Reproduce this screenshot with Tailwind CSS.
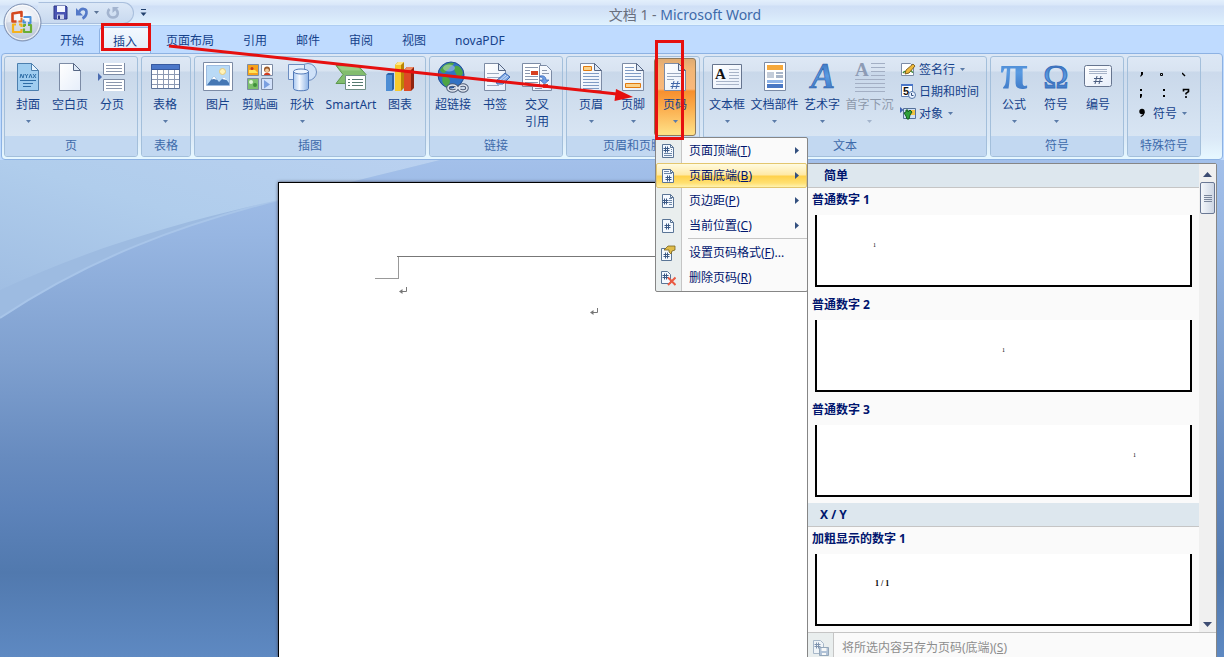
<!DOCTYPE html>
<html lang="zh-CN">
<head>
    <meta charset="UTF-8">
    <meta name="viewport" content="width=device-width, initial-scale=1.0">
    <title>文档 1 - Microsoft Word</title>
    <script src="https://cdn.jsdelivr.net/npm/@tailwindcss/browser@4"></script>
</head>
<body class="relative flex h-screen flex-col overflow-hidden bg-[#bfdbff] font-['Noto_Sans','Noto_Sans_CJK_SC',sans-serif] text-xs leading-[17px] text-[#15428b]">

    <!-- Shared shapes -->
    <svg class="absolute size-0">
        <defs>
            <linearGradient id="paper" x1="0" y1="0" x2="1" y2="1"><stop offset="0" stop-color="#fff"/><stop offset="1" stop-color="#e6eefa"/></linearGradient>
            <linearGradient id="blue" x1="0" y1="0" x2="0" y2="1"><stop offset="0" stop-color="#2f66b4"/><stop offset=".5" stop-color="#5a9be2"/><stop offset="1" stop-color="#3269b8"/></linearGradient>
            <linearGradient id="cyl" x1="0" y1="0" x2="1" y2="0"><stop offset="0" stop-color="#a9c8f0"/><stop offset=".4" stop-color="#f4f9ff"/><stop offset="1" stop-color="#8db3e6"/></linearGradient>
            <symbol id="page" viewBox="0 0 32 32">
                <path d="M5.500 2.500h14l7 7v20h-21z" fill="url(#paper)" stroke="#7c8ba5"/>
                <path d="M19.500 2.500v7h7z" fill="#dde8f6" stroke="#566684"/>
            </symbol>
            <symbol id="down" viewBox="0 0 5 3"><path d="M0 0h5L2.500 3z"/></symbol>
            <symbol id="mini" viewBox="0 0 16 16">
                <path d="M2.500 1.500h8l3 3v10h-11z" fill="#f4f9ff" stroke="#5a7596"/>
                <path d="M10.500 1.500v3h3" fill="none" stroke="#5a7596"/>
            </symbol>
            <symbol id="hash" viewBox="0 0 7 7"><path d="M2.500 0.500v6M4.500 0.500v6M0.500 2.500h6M0.500 4.500h6" fill="none" stroke="#3c5a86"/></symbol>
            <symbol id="return" viewBox="0 0 8 8"><path d="M7.500 0v4.500H2" fill="none" stroke="#777"/><path d="M0 4.500l3.500-2.500v5z" fill="#777"/></symbol>
        </defs>
    </svg>

    <!-- Title bar -->
    <header class="flex h-[26px] shrink-0 items-center border-b border-[#aecdf2] bg-[linear-gradient(#e3effc_0,#d9e7f9_5px,#cfdff6_6px,#d5e5f8_14px,#def0fd_24px,#e6f5ff_25px)]">
        <div class="relative flex h-full w-[150px] items-center">
            <button aria-label="Office" class="absolute left-[3px] top-[3px] z-10 size-[39px]">
                <svg viewBox="0 0 39 39" class="size-full">
                    <defs><radialGradient id="orb" cx=".5" cy=".35" r=".65"><stop offset="0" stop-color="#fff"/><stop offset=".6" stop-color="#e6eaf2"/><stop offset="1" stop-color="#b3bfd3"/></radialGradient></defs>
                    <circle cx="19.500" cy="19.500" r="18.500" fill="url(#orb)" stroke="#7f92b3"/>
                    <path d="M2.500 20a17 17 0 0 0 34 0q-17-5-34 0z" fill="#bcc7da" opacity=".5"/>
                    <circle cx="19.500" cy="19.500" r="17" fill="none" stroke="#fff" stroke-opacity=".8"/>
                    <g fill="none" stroke-linejoin="round">
                        <path d="M13.500 18.500h-4v-8l9-1.500v5" stroke="#d4481e" stroke-width="2.600"/>
                        <path d="M18.500 14.500v4h-3" stroke="#e8762a" stroke-width="2"/>
                        <path d="M20.500 14h7v6h-2.500M20.500 16.500v3h2.500" stroke="#4a8fd8" stroke-width="2"/>
                        <path d="M13 21.500h-3v7.500h8.500v-3M16 21.500h2.500v2.500" stroke="#f5b21c" stroke-width="2.200"/>
                        <path d="M21 25.500v3.500h7v-7h-3M21 24v-2h2" stroke="#6aae35" stroke-width="2.200"/>
                    </g>
                </svg>
            </button>
            <div class="ml-[38px] flex h-[22px] w-[96px] items-center gap-[7px] rounded-r-full border border-[#a9bfdd] border-l-transparent bg-[linear-gradient(#dce8f7,#c8d9ef)] pl-[14px]">
                <button aria-label="保存">
                    <svg viewBox="0 0 15 15" class="size-[15px]"><path d="M1 1h12l1 1v12H1z" fill="#4a55b4" stroke="#2c3685"/><path d="M4 1h8v6H4z" fill="#f3f6ff"/><path d="M4 9.500h7V14H4z" fill="#c9d0ea"/><path d="M5 10.500h2V14H5z" fill="#2c3685"/></svg>
                </button>
                <button aria-label="撤消" class="flex items-center gap-[5px]">
                    <svg viewBox="0 0 14 14" class="size-[14px]"><path d="M4 6C6 1.500 12 2 11.500 7c-.3 2.500-2 4.500-4 5.500" fill="none" stroke="#5479c8" stroke-width="2.600"/><path d="M1 2v7.500h7z" fill="#5479c8"/></svg>
                    <svg class="h-[3px] w-[5px] fill-[#5a7396]"><use href="#down"/></svg>
                </button>
                <button aria-label="恢复" disabled>
                    <svg viewBox="0 0 14 14" class="size-[14px]"><path d="M3.500 3C.5 6 2 11.500 7 11.500S13 6.500 10 3.500" fill="none" stroke="#a3b4cf" stroke-width="2.600"/><path d="M6.500 1H13L6.500 7z" fill="#a3b4cf"/></svg>
                </button>
            </div>
            <button aria-label="自定义快速访问工具栏" class="ml-1.5">
                <svg viewBox="0 0 7 8" class="h-2 w-[7px]"><path d="M1 .5h5" stroke="#23426e"/><path d="M.5 3.500h6l-3 3.500z" fill="#23426e"/></svg>
            </button>
        </div>
        <h1 class="flex-1 pr-1 pt-[3px] text-center text-[14px] text-[#3e6aaa]"><span class="text-[#696f7d]">文档 1 - </span>Microsoft Word</h1>
    </header>

    <!-- Ribbon tabs -->
    <nav class="flex h-[27px] shrink-0 items-end gap-px bg-[#bfdbff] pl-[46px]">
        <a href="#" class="px-[14px] pb-1">开始</a>
        <a href="#" class="-mb-px h-[27px] rounded-t border border-b-0 border-[#8db2e3] bg-[linear-gradient(#f2f8ff,#e1ecf8)] px-[13px] pt-[5px]">插入</a>
        <a href="#" class="px-[14px] pb-1">页面布局</a>
        <a href="#" class="px-[14px] pb-1">引用</a>
        <a href="#" class="px-[14px] pb-1">邮件</a>
        <a href="#" class="px-[14px] pb-1">审阅</a>
        <a href="#" class="px-[14px] pb-1">视图</a>
        <a href="#" class="px-[14px] pb-1">novaPDF</a>
    </nav>

    <!-- Ribbon -->
    <section class="relative z-10 mx-px flex shrink-0 gap-[3px] rounded border border-[#8db2e3] bg-[linear-gradient(#dce7f5_0,#d8e4f2_17px,#ccdaec_18px,#dbe9f7_84px,#e6f7ff_103px)] px-0.5 py-0.5 [&_button]:shrink-0">

        <!-- 页 -->
        <div class="flex flex-col rounded-[3px] border border-[#a3bfdb] bg-[linear-gradient(#dee8f5_0,#d8e3f1_14px,#c9d8ea_15px,#d8e5f3_79px)]">
            <div class="flex h-[79px] pl-0.5 pr-1 pt-px">
                <button class="flex h-[78px] w-[42px] flex-col items-center pt-[3px]">
                    <svg viewBox="0 0 32 32" class="size-8"><path d="M5.500 2.500h14l7 7v20h-21z" fill="#9fcdf0" stroke="#4c7fae"/><path d="M19.500 2.500v7h7z" fill="#e6f3fd" stroke="#4c7fae"/><path d="M8 17l1-4 2 4 1-4M13 13l1.500 2 1.500-2M14.500 15v2M17 17l1.500-4 1.500 4M21 13l3 4M24 13l-3 4M8 19.500h16M11 22.500h10M11 25.500h8" fill="none" stroke="#2e6da6"/></svg>
                    <span class="mt-[3px]">封面</span>
                    <svg class="mt-[7px] h-[3px] w-[5px] fill-[#5a7ba8]"><use href="#down"/></svg>
                </button>
                <button class="flex h-[78px] w-[42px] flex-col items-center pt-[3px]">
                    <svg class="size-8"><use href="#page"/></svg>
                    <span class="mt-[3px]">空白页</span>
                </button>
                <button class="flex h-[78px] w-[42px] flex-col items-center pt-[3px]">
                    <svg viewBox="0 0 32 32" class="size-8"><path d="M7.500 2v11.500h21V2M7.500 30V18.500h21V30" fill="#fff" stroke="#7c8ba5"/><path d="M10 4.500h16M10 7.500h16M10 10.500h16M10 21.500h16M10 24.500h16M10 27.500h16" stroke="#8b97ad"/><path d="M2 12v8l4-4z" fill="#4a6bb0"/></svg>
                    <span class="mt-[3px]">分页</span>
                </button>
            </div>
            <h2 class="h-5 rounded-b-[2px] bg-[#c2d8f1] text-center leading-5 text-[#3e6aaa]">页</h2>
        </div>

        <!-- 表格 -->
        <div class="flex flex-col rounded-[3px] border border-[#a3bfdb] bg-[linear-gradient(#dee8f5_0,#d8e3f1_14px,#c9d8ea_15px,#d8e5f3_79px)]">
            <div class="flex h-[79px] pl-0.5 pr-1 pt-px">
                <button class="flex h-[78px] w-[42px] flex-col items-center pt-[3px]">
                    <svg viewBox="0 0 32 32" class="size-8"><path d="M2.500 3.500h28v24h-28z" fill="#fff" stroke="#5d7398"/><path d="M2.500 3.500h28v5h-28z" fill="#4a76c8" stroke="#37599f"/><path d="M3 13.500h27M3 18.500h27M3 23.500h27M8.500 9v18M14.500 9v18M19.500 9v18M25.500 9v18" stroke="#8c99b2"/></svg>
                    <span class="mt-[3px]">表格</span>
                    <svg class="mt-[7px] h-[3px] w-[5px] fill-[#5a7ba8]"><use href="#down"/></svg>
                </button>
            </div>
            <h2 class="h-5 rounded-b-[2px] bg-[#c2d8f1] text-center leading-5 text-[#3e6aaa]">表格</h2>
        </div>

        <!-- 插图 -->
        <div class="flex flex-col rounded-[3px] border border-[#a3bfdb] bg-[linear-gradient(#dee8f5_0,#d8e3f1_14px,#c9d8ea_15px,#d8e5f3_79px)]">
            <div class="flex h-[79px] pl-0.5 pr-1 pt-px">
                <button class="flex h-[78px] w-[42px] flex-col items-center pt-[3px]">
                    <svg viewBox="0 0 32 32" class="size-8"><path d="M1.500 1.500h29v28h-29z" fill="#fff" stroke="#7c8ba5"/><path d="M4.500 4.500h23v20h-23z" fill="#b9daf6" stroke="#9dbbe0"/><circle cx="20.500" cy="10.500" r="3" fill="#fff3b8" stroke="#e5c878"/><path d="M5 24l7-9 5 6 5-5 5 6v2z" fill="#4678b4"/><path d="M9.500 18.500l2.500-3.500 3 4-3-1zM20 18l2-2 3 3-3-.5z" fill="#fff"/></svg>
                    <span class="mt-[3px]">图片</span>
                </button>
                <button class="flex h-[78px] w-[42px] flex-col items-center pt-[3px]">
                    <svg viewBox="0 0 32 32" class="size-8"><g stroke="#7c8ba5"><path d="M3.500 3.500h11v11h-11z" fill="#f5a21c"/><path d="M17.500 3.500h11v11h-11z" fill="#fff"/><path d="M3.500 17.500h11v11h-11z" fill="#7cc06c"/><path d="M17.500 17.500h11v11h-11z" fill="#d3e2fb"/></g><path d="M5 9h6l3 3H5z" fill="#ffe35a"/><circle cx="8" cy="7.500" r="1.500" fill="#c23a1c"/><path d="M20 14c0-3 6-3 6.500 0z" fill="#d23a20"/><circle cx="23" cy="8.500" r="3" fill="#9b5a2a"/><circle cx="23" cy="9.500" r="2" fill="#f4c79a"/><circle cx="7" cy="21" r="2" fill="#e3f6dc"/><circle cx="11" cy="24" r="2" fill="#3f8f3a"/><path d="M20 19l6 4.500-6 4z" fill="#7a9fe0"/></svg>
                    <span class="mt-[3px]">剪贴画</span>
                </button>
                <button class="flex h-[78px] w-[42px] flex-col items-center pt-[3px]">
                    <svg viewBox="0 0 32 32" class="size-8"><circle cx="22" cy="11" r="8.500" fill="#cfe1f8" stroke="#6b8cc0"/><path d="M2.500 3.500h16v15h-16z" fill="#e3eefc" stroke="#6b8cc0"/><path d="M7.500 10.500v17c0 3 15 3 15 0v-17z" fill="url(#cyl)" stroke="#5179b8"/><ellipse cx="15" cy="10.500" rx="7.500" ry="2.500" fill="#eef6ff" stroke="#5179b8"/></svg>
                    <span class="mt-[3px]">形状</span>
                    <svg class="mt-[7px] h-[3px] w-[5px] fill-[#5a7ba8]"><use href="#down"/></svg>
                </button>
                <button class="flex h-[78px] w-14 flex-col items-center pt-[3px]">
                    <svg viewBox="0 0 32 32" class="size-8"><path d="M1 4.500h22l8 9-8 9H1l7-9z" fill="#82bd6e" stroke="#5c984d"/><path d="M3 5.500h19l4 4H7z" fill="#a5d692" opacity=".7"/><path d="M10.500 14.500h20v14h-20z" fill="#fff" stroke="#6f8f86"/><path d="M13 18.500h2M13 21.500h2M13 24.500h2M17 18.500h11M17 21.500h11M17 24.500h11" stroke="#557a70"/></svg>
                    <span class="mt-[3px]">SmartArt</span>
                </button>
                <button class="flex h-[78px] w-[42px] flex-col items-center pt-[3px]">
                    <svg viewBox="0 0 32 32" class="size-8"><path d="M2 14l2-2h6v16l-2 2H2z" fill="#2b62a8"/><path d="M2 14h6v16H2z" fill="#4d8dd4"/><path d="M11 4l3-3h6v26l-3 3h-6z" fill="#b98406"/><path d="M11 4h6v26h-6z" fill="#f7c92c"/><path d="M11 4l3-3h6l-3 3z" fill="#ffe680"/><path d="M20 9l3-3h7v21l-3 3h-7z" fill="#8f2410"/><path d="M20 9h7v21h-7z" fill="#dc4a26"/><path d="M20 9l3-3h7l-3 3z" fill="#f08a64"/></svg>
                    <span class="mt-[3px]">图表</span>
                </button>
            </div>
            <h2 class="h-5 rounded-b-[2px] bg-[#c2d8f1] text-center leading-5 text-[#3e6aaa]">插图</h2>
        </div>

        <!-- 链接 -->
        <div class="flex flex-col rounded-[3px] border border-[#a3bfdb] bg-[linear-gradient(#dee8f5_0,#d8e3f1_14px,#c9d8ea_15px,#d8e5f3_79px)]">
            <div class="flex h-[79px] pl-0.5 pr-1 pt-px">
                <button class="flex h-[78px] w-[42px] flex-col items-center pt-[3px]">
                    <svg viewBox="0 0 32 32" class="size-8"><circle cx="14" cy="14" r="13" fill="#3272c4" stroke="#1f4d92"/><path d="M3 9C7 3 12 1 17 2c-1 3-4 3-5 6-3 1-3 4-5 4s-3-1-4-3zM18 5c4-1 7 3 8 7-2 5-5 6-6 3-1-4-4-5-2-10zM6 15c4 0 7 2 7 5s-2 4-3 6C6 24 4 20 6 15z" fill="#4ea544"/><ellipse cx="12" cy="7" rx="6" ry="3.500" fill="#fff" opacity=".35"/><g fill="none" stroke="#4e5d78" stroke-width="3.600"><ellipse cx="15.500" cy="27" rx="4.500" ry="3"/><ellipse cx="26" cy="27" rx="4" ry="3"/><path d="M17 27h7"/></g><g fill="none" stroke="#dfe5ef" stroke-width="1.600"><ellipse cx="15.500" cy="27" rx="4.500" ry="3"/><ellipse cx="26" cy="27" rx="4" ry="3"/><path d="M17 27h7"/></g></svg>
                    <span class="mt-[3px]">超链接</span>
                </button>
                <button class="flex h-[78px] w-[42px] flex-col items-center pt-[3px]">
                    <svg viewBox="0 0 32 32" class="size-8"><use href="#page"/><path d="M8 12.500h12M8 16.500h14M8 20.500h9M8 24.500h12" stroke="#9aa8bf"/><path d="M17 20l9-8 5 4-7 7h-6z" fill="#7fa8e4" stroke="#3a68b4"/><path d="M20 20l7-6M22 21l7-6" stroke="#cfe0f8"/></svg>
                    <span class="mt-[3px]">书签</span>
                </button>
                <button class="flex h-[78px] w-[42px] flex-col items-center pt-[3px]">
                    <svg viewBox="0 0 32 32" class="size-8"><path d="M1.500 2.500h18v23h-18z" fill="#fff" stroke="#7c8ba5"/><path d="M4 6.500h13M4 9.500h5M4 12.500h5M4 15.500h13M4 18.500h13M4 21.500h13" stroke="#8b97ad"/><path d="M10 10h7v4h-7z" fill="#d8401e"/><path d="M18.500 4.500h7l5 5v20h-19v-4h7z" fill="url(#paper)" stroke="#7c8ba5"/><path d="M21 9.500h5M21 12.500h7M14 27.500h7" stroke="#8b97ad"/><path d="M22 23h5v4h-5z" fill="#d8401e"/><path d="M19 15c4-1 6 1 6 4h3l-4.500 4-4.500-4h3c0-2-1-3-3-3z" fill="#6c9ce6" stroke="#2f5eb0" stroke-width=".7"/></svg>
                    <span class="mt-[3px] w-6">交叉引用</span>
                </button>
            </div>
            <h2 class="h-5 rounded-b-[2px] bg-[#c2d8f1] text-center leading-5 text-[#3e6aaa]">链接</h2>
        </div>

        <!-- 页眉和页脚 -->
        <div class="flex flex-col rounded-[3px] border border-[#a3bfdb] bg-[linear-gradient(#dee8f5_0,#d8e3f1_14px,#c9d8ea_15px,#d8e5f3_79px)]">
            <div class="flex h-[79px] pl-[3px] pr-[3px] pt-px">
                <button class="flex h-[78px] w-[42px] flex-col items-center pt-[3px]">
                    <svg viewBox="0 0 32 32" class="size-8"><use href="#page"/><path d="M8.500 5.500h8v4h-8z" fill="#fbd28b" stroke="#e07a10"/><path d="M8 12.500h16M8 15.500h16M8 18.500h16M8 21.500h16M8 24.500h16M8 27.500h16" stroke="#7f9bc4"/></svg>
                    <span class="mt-[3px]">页眉</span>
                    <svg class="mt-[7px] h-[3px] w-[5px] fill-[#5a7ba8]"><use href="#down"/></svg>
                </button>
                <button class="flex h-[78px] w-[42px] flex-col items-center pt-[3px]">
                    <svg viewBox="0 0 32 32" class="size-8"><use href="#page"/><path d="M8 6.500h9M8 9.500h9M8 12.500h16M8 15.500h16M8 18.500h16" stroke="#7f9bc4"/><path d="M8.500 22.500h15v4h-15z" fill="#fbd28b" stroke="#e07a10"/></svg>
                    <span class="mt-[3px]">页脚</span>
                    <svg class="mt-[7px] h-[3px] w-[5px] fill-[#5a7ba8]"><use href="#down"/></svg>
                </button>
                <div class="relative">
                    <button class="flex h-[78px] w-[42px] flex-col items-center rounded-[3px] border border-[#8e7a5c] bg-[linear-gradient(#dfab72_0,#f2b676_10px,#f9b87c_30px,#f78f2e_32px,#fbab4b_48px,#fede84_74px)] pt-[2px]">
                        <svg viewBox="0 0 32 32" class="size-8"><use href="#page"/><path d="M8 12.500h14M8 15.500h14M8 18.500h7" stroke="#9aa8bf"/><path d="M15 20l-2 8M19 20l-2 8M12 22.500h9M11.500 25.500h9" stroke="#4166a8" fill="none"/></svg>
                        <span class="mt-[3px]">页码</span>
                        <svg class="mt-[7px] h-[3px] w-[5px] fill-[#5a7ba8]"><use href="#down"/></svg>
                    </button>

                    <!-- 页码 menu -->
                    <ul class="absolute left-px top-[79px] w-[153px] rounded-[2px] border border-[#868686] bg-[linear-gradient(to_right,#e9eeee_25px,#c5c5c5_25px,#c5c5c5_26px,#fafafa_26px)] pb-px text-[#00156e]">
                        <li>
                            <button class="flex h-[25px] w-full items-center pl-1 pr-2">
                                <svg viewBox="0 0 16 16" class="size-4"><use href="#mini"/><use href="#hash" x="3" y="3" width="7" height="7"/><path d="M11 6.500h1M11 8.500h1M4 10.500h8M4 12.500h8" stroke="#6d87a8"/></svg>
                                <span class="ml-[13px] flex-1 text-left">页面顶端(<u>T</u>)</span>
                                <svg viewBox="0 0 4 7" class="h-[7px] w-1"><path d="M0 0v7l4-3.500z" fill="#33507f"/></svg>
                            </button>
                        </li>
                        <li class="relative">
                            <button class="flex h-[25px] w-full items-center rounded-[2px] border border-[#e3c66e] bg-[linear-gradient(#fffbe0_0,#ffe9a5_11px,#ffd14b_12px,#ffe072_19px,#fff3b0_23px)] pl-[3px] pr-[7px]">
                                <svg viewBox="0 0 16 16" class="size-4"><use href="#mini"/><path d="M4 3.500h5M4 5.500h8" stroke="#6d87a8"/><use href="#hash" x="5" y="7" width="7" height="7"/></svg>
                                <span class="ml-[13px] flex-1 text-left">页面底端(<u>B</u>)</span>
                                <svg viewBox="0 0 4 7" class="h-[7px] w-1"><path d="M0 0v7l4-3.500z" fill="#33507f"/></svg>
                            </button>

                            <!-- Gallery -->
                            <div class="absolute left-full top-0 w-[410px] rounded-[2px] border border-[#868686] bg-[#fafafa]">
                                <div class="flex">
                                    <div class="flex-1">
                                        <h3 class="h-6 border-b border-[#c5c5c5] bg-[#dde7ee] pl-4 font-bold leading-6">简单</h3>
                                        <div class="px-[7px] pb-1.5">
                                            <h4 class="-ml-[3px] mb-1 h-[23px] font-bold leading-[23px]">普通数字 1</h4>
                                            <div class="h-[72px] border-2 border-t-0 border-black bg-white pl-[56px] pt-[26px] font-['Liberation_Serif',serif] text-[6px] leading-2 text-black">1</div>
                                        </div>
                                        <div class="px-[7px] pb-1.5">
                                            <h4 class="-ml-[3px] mb-1 h-[23px] font-bold leading-[23px]">普通数字 2</h4>
                                            <div class="h-[72px] border-2 border-t-0 border-black bg-white pt-[26px] text-center font-['Liberation_Serif',serif] text-[6px] leading-2 text-black">1</div>
                                        </div>
                                        <div class="px-[7px] pb-1.5">
                                            <h4 class="-ml-[3px] mb-1 h-[23px] font-bold leading-[23px]">普通数字 3</h4>
                                            <div class="h-[72px] border-2 border-t-0 border-black bg-white pr-[54px] pt-[26px] text-right font-['Liberation_Serif',serif] text-[6px] leading-2 text-black">1</div>
                                        </div>
                                        <h3 class="h-6 border-b border-[#c5c5c5] bg-[#dde7ee] pl-3 font-bold leading-6">X / Y</h3>
                                        <div class="px-[7px] pb-1.5">
                                            <h4 class="-ml-[3px] mb-1 h-[23px] font-bold leading-[23px]">加粗显示的数字 1</h4>
                                            <div class="h-[72px] border-2 border-t-0 border-black bg-white pl-[58px] pt-[26px] font-['Liberation_Serif',serif] text-[8px] font-bold leading-2 text-black">1 / 1</div>
                                        </div>
                                    </div>
                                    <div class="flex w-[17px] flex-col items-center bg-[#f0f0f0]">
                                        <svg viewBox="0 0 9 5" class="mt-[8px] h-[5px] w-[9px]"><path d="M0 5h9L4.500 0z" fill="#3d4c72"/></svg>
                                        <div class="mt-[5px] flex h-8 w-[15px] flex-col items-center justify-center gap-px rounded-[2px] border border-[#6a7894] bg-[linear-gradient(to_right,#f4f7fb,#cdd6e4)]">
                                            <span class="h-px w-2 bg-[#7a869c]"></span>
                                            <span class="h-px w-2 bg-[#7a869c]"></span>
                                            <span class="h-px w-2 bg-[#7a869c]"></span>
                                            <span class="h-px w-2 bg-[#7a869c]"></span>
                                        </div>
                                        <svg viewBox="0 0 9 5" class="mb-[5px] mt-auto h-[5px] w-[9px]"><path d="M0 0h9L4.500 5z" fill="#3d4c72"/></svg>
                                    </div>
                                </div>
                                <button disabled class="flex h-[30px] w-full items-center border-t border-[#c5c5c5] bg-[linear-gradient(to_right,#e9eeee_25px,#c5c5c5_25px,#c5c5c5_26px,#fafafa_26px)] pl-1 text-[#8d8d8d]">
                                    <svg viewBox="0 0 17 17" class="size-[17px]"><g opacity=".6"><path d="M1.500 1.500h7l3 3v10h-10z" fill="#f4f9ff" stroke="#7d95b2"/><use href="#hash" x="2" y="3" width="7" height="7"/><path d="M7.500 8.500h9v8h-9z" fill="#8ba6c8" stroke="#5c7899"/><path d="M9.500 9h5v3h-5zM10 14h4v2h-4z" fill="#fff"/></g></svg>
                                    <span class="ml-[13px]">将所选内容另存为页码(底端)(<u>S</u>)</span>
                                </button>
                            </div>
                        </li>
                        <li>
                            <button class="flex h-[25px] w-full items-center pl-1 pr-2">
                                <svg viewBox="0 0 16 16" class="size-4"><use href="#mini"/><use href="#hash" x="2" y="5" width="7" height="7"/><path d="M9 5.500h3M9 7.500h3M9 9.500h3M9 11.500h3" stroke="#6d87a8"/></svg>
                                <span class="ml-[13px] flex-1 text-left">页边距(<u>P</u>)</span>
                                <svg viewBox="0 0 4 7" class="h-[7px] w-1"><path d="M0 0v7l4-3.500z" fill="#33507f"/></svg>
                            </button>
                        </li>
                        <li>
                            <button class="flex h-[25px] w-full items-center pl-1 pr-2">
                                <svg viewBox="0 0 16 16" class="size-4"><use href="#mini"/><use href="#hash" x="4" y="5" width="7" height="7"/></svg>
                                <span class="ml-[13px] flex-1 text-left">当前位置(<u>C</u>)</span>
                                <svg viewBox="0 0 4 7" class="h-[7px] w-1"><path d="M0 0v7l4-3.500z" fill="#33507f"/></svg>
                            </button>
                        </li>
                        <li class="mb-px ml-8 h-px bg-[#c5c5c5]"></li>
                        <li>
                            <button class="flex h-[25px] w-full items-center pl-1 pr-2">
                                <svg viewBox="0 0 16 16" class="size-4"><path d="M1.500 3.500h7l3 3v9h-10z" fill="#f4f9ff" stroke="#5a7596"/><use href="#hash" x="3" y="7" width="7" height="7"/><path d="M4 5l4-4h7v4l-3 1-1 3-2-2V5z" fill="#e0bc4a" stroke="#7a6420" stroke-width=".8"/></svg>
                                <span class="ml-[13px] whitespace-nowrap text-left">设置页码格式(<u>F</u>)...</span>
                            </button>
                        </li>
                        <li>
                            <button class="flex h-[25px] w-full items-center pl-1 pr-2">
                                <svg viewBox="0 0 16 16" class="size-4"><path d="M1.500 1.500h6l3 3v9h-9z" fill="#f4f9ff" stroke="#5a7596"/><use href="#hash" x="2" y="3" width="7" height="7"/><path d="M8 7.500l7.500 7.500M15.500 7.500L8 15" stroke="#ea5a42" stroke-width="2"/></svg>
                                <span class="ml-[13px] whitespace-nowrap text-left">删除页码(<u>R</u>)</span>
                            </button>
                        </li>
                    </ul>
                </div>
            </div>
            <h2 class="h-5 rounded-b-[2px] bg-[#c2d8f1] text-center leading-5 text-[#3e6aaa]">页眉和页脚</h2>
        </div>

        <!-- 文本 -->
        <div class="flex flex-col rounded-[3px] border border-[#a3bfdb] bg-[linear-gradient(#dee8f5_0,#d8e3f1_14px,#c9d8ea_15px,#d8e5f3_79px)]">
            <div class="flex h-[79px] pl-0.5 pr-1 pt-px">
                <button class="flex h-[78px] w-[42px] flex-col items-center pt-[3px]">
                    <svg viewBox="0 0 32 32" class="size-8"><path d="M1.500 3.500h29v24h-29z" fill="url(#paper)" stroke="#66758f"/><text x="4" y="18" font-family="Liberation Serif" font-size="15" font-weight="bold" fill="#111">A</text><path d="M18 8.500h10M18 11.500h10M18 14.500h10M18 17.500h10M5 20.500h23M5 23.500h23" stroke="#a8b4c8"/></svg>
                    <span class="mt-[3px]">文本框</span>
                    <svg class="mt-[7px] h-[3px] w-[5px] fill-[#5a7ba8]"><use href="#down"/></svg>
                </button>
                <button class="flex h-[78px] w-[53px] flex-col items-center pt-[3px]">
                    <svg viewBox="0 0 32 32" class="size-8"><path d="M5.500 1.500h21v28h-21z" fill="#fff" stroke="#7c8ba5"/><path d="M8 4h16v5H8z" fill="#f5a83c"/><path d="M8 11h7v6H8z" fill="#c3ccd9"/><path d="M17 11h7v2h-7zM17 14h7v3h-7z" fill="#a9b6c9"/><path d="M8 19h16v3H8z" fill="#8fb4e8"/><path d="M8 23h16v4H8z" fill="#4a78c4"/></svg>
                    <span class="mt-[3px]">文档部件</span>
                    <svg class="mt-[7px] h-[3px] w-[5px] fill-[#5a7ba8]"><use href="#down"/></svg>
                </button>
                <button class="flex h-[78px] w-[42px] flex-col items-center pt-[3px]">
                    <svg viewBox="0 0 32 32" class="size-8 overflow-visible"><text x="5" y="27" font-family="Liberation Serif" font-size="36" font-style="italic" font-weight="bold" fill="url(#blue)" stroke="#2c5ca6" stroke-width=".6">A</text></svg>
                    <span class="mt-[3px]">艺术字</span>
                    <svg class="mt-[7px] h-[3px] w-[5px] fill-[#5a7ba8]"><use href="#down"/></svg>
                </button>
                <button disabled class="flex h-[78px] w-[53px] flex-col items-center pt-[3px] text-[#8d99ab]">
                    <svg viewBox="0 0 32 32" class="size-8 overflow-visible"><text x="1" y="15" font-family="Liberation Serif" font-size="19" font-weight="bold" fill="#8d9bb5">A</text><path d="M17 2.500h14M17 6.500h14M17 10.500h14M17 14.500h14M1 18.500h30M1 22.500h30M1 26.500h30M1 30.500h30" stroke="#a3afc4"/></svg>
                    <span class="mt-[3px]">首字下沉</span>
                    <svg class="mt-[7px] h-[3px] w-[5px] fill-[#a3b4cc]"><use href="#down"/></svg>
                </button>
                <div class="flex w-[86px] flex-col items-start pl-1">
                    <button class="flex h-[22px] items-center">
                        <svg viewBox="0 0 16 16" class="size-4"><path d="M1.500 2.500h9l3 3v9h-12z" fill="#fff" stroke="#7c8ba5"/><path d="M3 12c3-4 3 2 6-1s3 1 4 0" fill="none" stroke="#3b8a3b" stroke-width="1.500"/><path d="M6 9l7-6 2 2-6 7-4 1z" fill="#efb93c" stroke="#6a4d12" stroke-width=".8"/></svg>
                        <span class="ml-[3px]">签名行</span>
                        <svg class="ml-[5px] h-[3px] w-[5px] fill-[#5a7ba8]"><use href="#down"/></svg>
                    </button>
                    <button class="flex h-[22px] items-center">
                        <svg viewBox="0 0 16 16" class="size-4"><path d="M1.500 1.500h11v12h-11z" fill="#fff" stroke="#5d7fb8"/><path d="M1 1h12v2H1z" fill="#4a76c8"/><text x="3" y="12" font-family="Liberation Sans" font-size="11" font-weight="bold" fill="#111">5</text><circle cx="12" cy="12" r="3.500" fill="#e9f2ff" stroke="#5477a8"/><path d="M11.500 10v2.500h2" fill="none" stroke="#33507f"/></svg>
                        <span class="ml-[3px] whitespace-nowrap">日期和时间</span>
                    </button>
                    <button class="flex h-[22px] items-center">
                        <svg viewBox="0 0 16 16" class="size-4"><path d="M3.500 3.500h12v10h-12z" fill="#cfe0f6" stroke="#55709a"/><path d="M10 5h5v5h-5z" fill="#f0c444"/><path d="M4 8l2-1V5h2v2l2-2 2 2-2 3-1 4H7l-1-3z" fill="#2fa03a" stroke="#145c1c"/><path d="M0 2v6l3.500-3z" fill="#3f62b0"/></svg>
                        <span class="ml-[3px]">对象</span>
                        <svg class="ml-[5px] h-[3px] w-[5px] fill-[#5a7ba8]"><use href="#down"/></svg>
                    </button>
                </div>
            </div>
            <h2 class="h-5 rounded-b-[2px] bg-[#c2d8f1] text-center leading-5 text-[#3e6aaa]">文本</h2>
        </div>

        <!-- 符号 -->
        <div class="flex flex-col rounded-[3px] border border-[#a3bfdb] bg-[linear-gradient(#dee8f5_0,#d8e3f1_14px,#c9d8ea_15px,#d8e5f3_79px)]">
            <div class="flex h-[79px] pl-0.5 pr-1 pt-px">
                <button class="flex h-[78px] w-[42px] flex-col items-center pt-[3px]">
                    <svg viewBox="0 0 32 32" class="size-8 overflow-visible"><text x="16" y="28" text-anchor="middle" font-family="Liberation Serif" font-size="50" font-weight="bold" fill="url(#blue)">π</text></svg>
                    <span class="mt-[3px]">公式</span>
                    <svg class="mt-[7px] h-[3px] w-[5px] fill-[#5a7ba8]"><use href="#down"/></svg>
                </button>
                <button class="flex h-[78px] w-[42px] flex-col items-center pt-[3px]">
                    <svg viewBox="0 0 32 32" class="size-8 overflow-visible"><text x="16" y="27" text-anchor="middle" font-family="Liberation Serif" font-size="34" fill="url(#blue)" stroke="#3a70bc">Ω</text></svg>
                    <span class="mt-[3px]">符号</span>
                    <svg class="mt-[7px] h-[3px] w-[5px] fill-[#5a7ba8]"><use href="#down"/></svg>
                </button>
                <button class="flex h-[78px] w-[42px] flex-col items-center pt-[3px]">
                    <svg viewBox="0 0 32 32" class="size-8"><rect x="2.500" y="4.500" width="27" height="21" rx="2" fill="url(#paper)" stroke="#66758f"/><path d="M7 8.500h18M7 10.500h18M7 12.500h18" stroke="#a8b4c8"/><path d="M15 15l-2 8M19 15l-2 8M12 17.500h9M11.500 20.500h9" stroke="#4a5d80" fill="none"/></svg>
                    <span class="mt-[3px]">编号</span>
                </button>
            </div>
            <h2 class="h-5 rounded-b-[2px] bg-[#c2d8f1] text-center leading-5 text-[#3e6aaa]">符号</h2>
        </div>

        <!-- 特殊符号 -->
        <div class="flex w-[74px] flex-col rounded-[3px] border border-[#a3bfdb] bg-[linear-gradient(#dee8f5_0,#d8e3f1_14px,#c9d8ea_15px,#d8e5f3_79px)]">
            <div class="grid h-[79px] grid-cols-3 content-start px-[3px] pt-[6px] text-black">
                <button aria-label="逗号" class="flex h-5 items-center justify-center"><svg viewBox="0 0 8 10" class="h-2.5 w-2"><path d="M3 4h2v2.500L3 8.500H2l1-2z"/></svg></button>
                <button aria-label="句号" class="flex h-5 items-center justify-center"><svg viewBox="0 0 8 10" class="h-2.5 w-2"><path d="M.5 5.500h2v2h-2z" fill="none" stroke="#000"/></svg></button>
                <button aria-label="顿号" class="flex h-5 items-center justify-center"><svg viewBox="0 0 8 10" class="h-2.5 w-2"><path d="M0 5l3 3" fill="none" stroke="#000" stroke-width="1.500"/></svg></button>
                <button aria-label="分号" class="flex h-5 items-center justify-center"><svg viewBox="0 0 8 10" class="h-2.5 w-2"><path d="M2 1h2v2H2zM2 6h2v2L3 10H2z"/></svg></button>
                <button aria-label="冒号" class="flex h-5 items-center justify-center"><svg viewBox="0 0 8 10" class="h-2.5 w-2"><path d="M3 1h2v2H3zM3 7h2v2H3z"/></svg></button>
                <button aria-label="问号" class="flex h-5 items-center justify-center"><svg viewBox="0 0 8 10" class="h-2.5 w-2"><path d="M1.500 3.500V1.500h5v2L4 5.500v1M4 8v2" fill="none" stroke="#000" stroke-width="1.600"/></svg></button>
                <button aria-label="引号" class="flex h-5 items-center justify-center"><svg viewBox="0 0 8 10" class="h-2.5 w-2"><circle cx="4" cy="3.500" r="2.700"/><path d="M6.700 3.500C6.700 6.500 5 8.500 3 9l-.5-1C4 7.500 5 6.500 5 5z"/></svg></button>
                <button class="col-span-2 flex h-5 items-center text-[#15428b]">
                    符号
                    <svg class="ml-[5px] h-[3px] w-[5px] fill-[#5a7ba8]"><use href="#down"/></svg>
                </button>
            </div>
            <h2 class="h-5 rounded-b-[2px] bg-[#c2d8f1] text-center leading-5 text-[#3e6aaa]">特殊符号</h2>
        </div>
    </section>

    <!-- Workspace -->
    <main class="relative flex flex-1 overflow-hidden">
        <svg viewBox="0 0 1224 497" preserveAspectRatio="none" class="absolute inset-0 size-full">
            <defs>
                <linearGradient id="sky" x1="0" y1="0" x2="0" y2="1">
                    <stop offset="0" stop-color="#a3c0ea"/><stop offset=".15" stop-color="#97b6e2"/><stop offset=".4" stop-color="#7fa0cf"/><stop offset=".6" stop-color="#678bbf"/><stop offset=".7" stop-color="#5d83ba"/><stop offset=".83" stop-color="#5179ae"/><stop offset="1" stop-color="#5e89c2"/>
                </linearGradient>
                <linearGradient id="glow" x1="1" y1="0" x2="0" y2="1"><stop offset="0" stop-color="#bad1f0"/><stop offset=".5" stop-color="#b0cdec"/><stop offset="1" stop-color="#a0bee3"/></linearGradient>
            </defs>
            <path d="M0 0h1224v497H0z" fill="url(#sky)"/>
            <path d="M0 158C90 98 180 65 278 40 330 27 380 15 440 0H0z" fill="#9dbbe1"/>
            <path d="M0 158C90 98 180 65 278 40" fill="none" stroke="#a8c5e9" stroke-width="2"/>
            <path d="M0 130C90 88 180 62 278 40 330 27 380 15 440 0H0z" fill="url(#glow)"/>
        </svg>

        <!-- Document page -->
        <article class="relative ml-[278px] mr-[120px] mt-[22px] flex-1 border-l border-t border-black bg-white pt-[73px] shadow-[0_0_3px_#445]">
            <div class="ml-[118px] mr-[90px] border-t border-[#777]"></div>
            <div class="ml-[96px] h-[22px] w-6 border-b border-r border-[#999]"></div>
            <p class="ml-[120px] mt-2"><svg class="size-2"><use href="#return"/></svg></p>
            <p class="ml-[311px] mt-[13px]"><svg class="size-2"><use href="#return"/></svg></p>
        </article>
    </main>

    <!-- Callouts -->
    <svg class="pointer-events-none absolute left-0 top-0 z-20 h-40 w-[720px]" fill="none" stroke="#e60f0f" stroke-width="3">
        <path d="M102.500 24.500h47v25h-47zM656.500 41.500h26v97h-26z"/>
        <path d="M169 46l448 48"/>
        <path d="M633 97l-18.500 4 1.500-12z" fill="#e60f0f" stroke="none"/>
    </svg>
</body>
</html>
